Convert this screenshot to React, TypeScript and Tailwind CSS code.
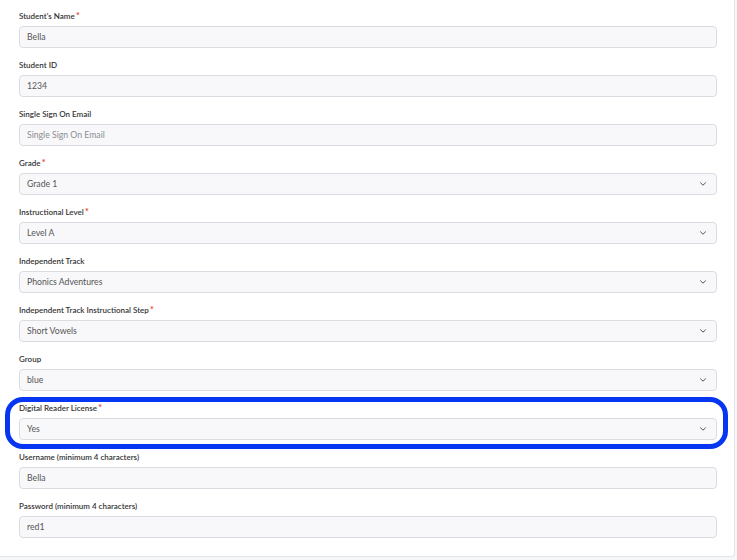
import React from "react";

type Field = { label: string; value: string; required?: boolean; select?: boolean; placeholder?: boolean };

const fields: Field[] = [
  { label: "Student's Name", value: "Bella", required: true },
  { label: "Student ID", value: "1234" },
  { label: "Single Sign On Email", value: "Single Sign On Email", placeholder: true },
  { label: "Grade", value: "Grade 1", required: true, select: true },
  { label: "Instructional Level", value: "Level A", required: true, select: true },
  { label: "Independent Track", value: "Phonics Adventures", select: true },
  { label: "Independent Track Instructional Step", value: "Short Vowels", required: true, select: true },
  { label: "Group", value: "blue", select: true },
  { label: "Digital Reader License", value: "Yes", required: true, select: true },
  { label: "Username (minimum 4 characters)", value: "Bella" },
  { label: "Password (minimum 4 characters)", value: "red1" },
];

function Chevron() {
  return (
    <svg width="8" height="6" viewBox="0 0 8 6" className="shrink-0">
      <path d="M1.5 1.8 L4 4.2 L6.5 1.8" fill="none" stroke="#555" strokeWidth="1" strokeLinecap="round" strokeLinejoin="round" />
    </svg>
  );
}

export default function App() {
  return (
    <div className="w-[737px] h-[560px] bg-[#f6f7f9] overflow-hidden" style={{ fontFamily: "Lato, 'Noto Sans', sans-serif" }}>
      <div className="relative w-[735px] h-[557px] bg-white border-r border-b border-[#e3e5e8] rounded-br-[4px] pl-[19px] pr-[17px] pt-[9px]">
        <div className="flex flex-col gap-[10px]">
          {fields.map((f) => (
            <div key={f.label} className="flex flex-col gap-[5px]">
              <div className="h-[12px] leading-[14px] text-[8px] font-semibold text-[#333] whitespace-nowrap">
                {f.label}
                {f.required && <span className="text-[#e5432f] text-[10px] leading-[0px] ml-[1px]">*</span>}
              </div>
              <div className="h-[22px] bg-[#f8f8fa] border border-[#d9dce1] rounded-[4px] pl-[7px] pr-[9px] flex items-center justify-between">
                <span className={`text-[8.7px] ${f.placeholder ? "text-[#8a8d92]" : "text-[#555]"}`}>{f.value}</span>
                {f.select && <Chevron />}
              </div>
            </div>
          ))}
        </div>
        <div className="absolute left-[5px] top-[397px] w-[723px] h-[52px] border-[5px] border-[#0636f2] rounded-[18px] pointer-events-none" />
      </div>
    </div>
  );
}
